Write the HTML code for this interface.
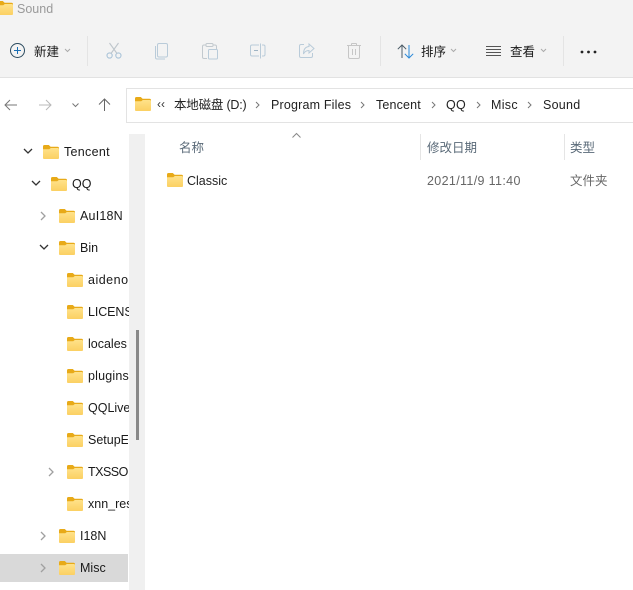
<!DOCTYPE html>
<html><head><meta charset="utf-8"><style>
html,body{margin:0;padding:0}
body{width:633px;height:590px;overflow:hidden;background:#fff;position:relative;font-family:"Liberation Sans","Noto Sans CJK SC",sans-serif;font-size:12.5px;color:#1a1a1a}
.t{position:absolute;white-space:nowrap;line-height:16px}
.a{position:absolute}
svg{position:absolute;overflow:visible}
.clip{overflow:hidden}
</style></head><body>
<svg width="0" height="0" style="position:absolute"><defs>
<linearGradient id="g" x1="0" y1="0" x2="0" y2="1"><stop offset="0" stop-color="#ffe28a"/><stop offset="1" stop-color="#fbd062"/></linearGradient>
<symbol id="f" viewBox="0 0 16 14"><path d="M0 1.600Q0 0 1.500 0H5.800L7.600 1.800H14.500Q16 1.800 16 3.300V5H0Z" fill="#e8aa18"/><path d="M0 4.200H6.200L7.800 3H14.800Q16 3 16 4.200V13Q16 14 15 14H1Q0 14 0 13Z" fill="url(#g)"/></symbol>
</defs></svg>

<div class="a" style="left:0;top:0;width:633px;height:77px;background:#f3f3f3;border-bottom:1px solid #e2e2e2"></div>

<svg style="left:-3px;top:1px" width="16" height="14"><use href="#f"/></svg>
<div class="t" style="left:17px;top:1px;color:#9a9a9a;font-size:12.5px">Sound</div>

<svg style="left:10px;top:43px" width="16" height="16" fill="none" stroke="#2b4a5e" stroke-width="1"><circle cx="7.500" cy="7.500" r="7"/><path d="M7.500 4v7M4 7.500h7" stroke="#1a6fb5"/></svg>
<div class="t" style="left:34px;top:44px">新建</div>
<svg style="left:64px;top:48px" width="8" height="6" fill="none" stroke="#aaa"><path d="M1 1l2.500 2.500L6 1"/></svg>
<div class="a" style="left:87px;top:36px;width:1px;height:30px;background:#e4e4e4"></div>

<svg style="left:106px;top:42px" width="16" height="18" fill="none" stroke="#a9c3d8" stroke-width="1.100"><circle cx="3.600" cy="13.500" r="2.600"/><circle cx="12.400" cy="13.500" r="2.600"/><path d="M5 11.500L12.500 1M11 11.500L3.500 1" stroke="#bfc6cc"/></svg>
<svg style="left:155px;top:43px" width="14" height="17" fill="none" stroke="#b9cbd9"><rect x="2.500" y=".5" width="10" height="13.500" rx="1.500"/><path d="M.5 3v11.500q0 1.500 1.500 1.500h8"/></svg>
<svg style="left:202px;top:43px" width="16" height="17" fill="none" stroke="#c2c9ce"><path d="M4 2H2q-1.500 0-1.500 1.500V14q0 1.500 1.500 1.500h3M11 2h2q1.500 0 1.500 1.500V6"/><rect x="4" y=".5" width="7" height="3" rx="1"/><rect x="6.500" y="6.500" width="9" height="9.500" rx="1" stroke="#b9cbd9"/></svg>
<svg style="left:250px;top:43px" width="16" height="16" fill="none" stroke="#b9cbd9"><path d="M9 2H2Q.5 2 .5 3.500v8Q.5 13 2 13h7M12 2h1.500Q15 2 15 3.500v8Q15 13 13.500 13H12M10.500 .5v15"/><path d="M4 7.500h4" stroke="#9fb4c4"/></svg>
<svg style="left:299px;top:43px" width="16" height="16" fill="none" stroke="#b9cbd9"><path d="M5 1.500H2Q.5 1.500 .5 3v10Q.5 14.500 2 14.500h10q1.500 0 1.500-1.500v-3"/><path d="M10 1l5 4.500-5 4.500V7.500Q6 7.500 4.500 11 4.500 4 10 3.500Z"/></svg>
<svg style="left:347px;top:43px" width="14" height="16" fill="none" stroke="#c6c6c6"><path d="M0 2.500h14M4.500 2.500V1q0-.5.5-.5h4q.5 0 .5.5v1.500M1.500 2.500V14q0 1.500 1.500 1.500h8q1.500 0 1.500-1.500V2.500M5.500 6v6M8.500 6v6"/></svg>
<div class="a" style="left:380px;top:36px;width:1px;height:30px;background:#e4e4e4"></div>

<svg style="left:397px;top:44px" width="18" height="15" fill="none" stroke-width="1"><path d="M5 14V1M.8 5.200L5 1l4.200 4.200" stroke="#4a5a65"/><path d="M12 1v13M7.800 9.800L12 14l4.200-4.200" stroke="#2a88d8"/></svg>
<div class="t" style="left:421px;top:44px">排序</div>
<svg style="left:450px;top:48px" width="8" height="6" fill="none" stroke="#aaa"><path d="M1 1l2.500 2.500L6 1"/></svg>
<svg style="left:486px;top:46px" width="16" height="11" fill="none" stroke="#555"><path d="M0 .5h15M0 3.500h15M0 6.500h15M0 9.500h15" stroke-width=".9"/></svg>
<div class="t" style="left:510px;top:44px">查看</div>
<svg style="left:540px;top:48px" width="8" height="6" fill="none" stroke="#aaa"><path d="M1 1l2.500 2.500L6 1"/></svg>
<div class="a" style="left:563px;top:36px;width:1px;height:30px;background:#e4e4e4"></div>
<svg style="left:580px;top:50px" width="17" height="4" fill="#222"><circle cx="2" cy="2" r="1.400"/><circle cx="8.500" cy="2" r="1.400"/><circle cx="15" cy="2" r="1.400"/></svg>

<svg style="left:4px;top:99px" width="13" height="12" fill="none" stroke="#777" stroke-width="1"><path d="M13 6H1M6 1L1 6l5 5"/></svg>
<svg style="left:39px;top:99px" width="13" height="12" fill="none" stroke="#b8b8b8" stroke-width="1"><path d="M0 6h12M7 1l5 5-5 5"/></svg>
<svg style="left:72px;top:103px" width="7" height="5" fill="none" stroke="#777"><path d="M.5 .5L3.500 3.500 6.500 .5"/></svg>
<svg style="left:98px;top:98px" width="13" height="13" fill="none" stroke="#666" stroke-width="1"><path d="M6.500 13V1M1 6.500L6.500 1 12 6.500"/></svg>

<div class="a" style="left:126px;top:88px;width:520px;height:33px;border:1px solid #e3e3e3;box-sizing:content-box"></div>
<svg style="left:135px;top:97px" width="16" height="14"><use href="#f"/></svg>
<div class="t" style="left:157px;top:96px;font-size:12px;color:#333">‹‹</div>
<div class="t" style="left:174px;top:97px;color:#222;letter-spacing:-.2px">本地磁盘 (D:)</div>
<div class="t" style="left:271px;top:97px;color:#222;letter-spacing:.18px">Program Files</div>
<div class="t" style="left:376px;top:97px;color:#222;letter-spacing:.15px">Tencent</div>
<div class="t" style="left:446px;top:97px;color:#222;letter-spacing:.3px">QQ</div>
<div class="t" style="left:491px;top:97px;color:#222;letter-spacing:.3px">Misc</div>
<div class="t" style="left:543px;top:97px;color:#222;letter-spacing:.25px">Sound</div>
<svg style="left:255px;top:101px" width="6" height="8" fill="none" stroke="#777"><path d="M1 1l3 3-3 3"/></svg>
<svg style="left:360px;top:101px" width="6" height="8" fill="none" stroke="#777"><path d="M1 1l3 3-3 3"/></svg>
<svg style="left:431px;top:101px" width="6" height="8" fill="none" stroke="#777"><path d="M1 1l3 3-3 3"/></svg>
<svg style="left:476px;top:101px" width="6" height="8" fill="none" stroke="#777"><path d="M1 1l3 3-3 3"/></svg>
<svg style="left:527px;top:101px" width="6" height="8" fill="none" stroke="#777"><path d="M1 1l3 3-3 3"/></svg>

<div class="a" style="left:0;top:554px;width:128px;height:28px;background:#d9d9d9"></div>
<div class="a" style="left:129px;top:134px;width:16px;height:456px;background:#f0f0f0"></div>
<div class="a" style="left:136px;top:330px;width:3px;height:110px;background:#8a8a8a"></div>

<svg style="left:23px;top:148px" width="10" height="7" fill="none" stroke="#333" stroke-width="1.300"><path d="M1 1l4 4 4-4"/></svg>
<svg style="left:43px;top:145px" width="16" height="14"><use href="#f"/></svg>
<div class="t" style="left:64px;top:144px;letter-spacing:.3px">Tencent</div>

<svg style="left:31px;top:180px" width="10" height="7" fill="none" stroke="#333" stroke-width="1.300"><path d="M1 1l4 4 4-4"/></svg>
<svg style="left:51px;top:177px" width="16" height="14"><use href="#f"/></svg>
<div class="t" style="left:72px;top:176px">QQ</div>

<svg style="left:40px;top:211px" width="7" height="10" fill="none" stroke="#a0a0a0" stroke-width="1.300"><path d="M1 1l4 4-4 4"/></svg>
<svg style="left:59px;top:209px" width="16" height="14"><use href="#f"/></svg>
<div class="t" style="left:80px;top:208px;letter-spacing:.2px">AuI18N</div>

<svg style="left:39px;top:244px" width="10" height="7" fill="none" stroke="#333" stroke-width="1.300"><path d="M1 1l4 4 4-4"/></svg>
<svg style="left:59px;top:241px" width="16" height="14"><use href="#f"/></svg>
<div class="t" style="left:80px;top:240px">Bin</div>

<svg style="left:67px;top:273px" width="16" height="14"><use href="#f"/></svg>
<div class="t clip" style="left:88px;top:272px;width:40px;letter-spacing:.5px">aidenoise</div>
<svg style="left:67px;top:305px" width="16" height="14"><use href="#f"/></svg>
<div class="t clip" style="left:88px;top:304px;width:41px;letter-spacing:-.1px">LICENSES</div>
<svg style="left:67px;top:337px" width="16" height="14"><use href="#f"/></svg>
<div class="t clip" style="left:88px;top:336px;width:41px">locales</div>
<svg style="left:67px;top:369px" width="16" height="14"><use href="#f"/></svg>
<div class="t clip" style="left:88px;top:368px;width:41px;letter-spacing:.2px">plugins</div>
<svg style="left:67px;top:401px" width="16" height="14"><use href="#f"/></svg>
<div class="t clip" style="left:88px;top:400px;width:41px">QQLiveSDK</div>
<svg style="left:67px;top:433px" width="16" height="14"><use href="#f"/></svg>
<div class="t clip" style="left:88px;top:432px;width:40px">SetupEx</div>
<svg style="left:48px;top:467px" width="7" height="10" fill="none" stroke="#a0a0a0" stroke-width="1.300"><path d="M1 1l4 4-4 4"/></svg>
<svg style="left:67px;top:465px" width="16" height="14"><use href="#f"/></svg>
<div class="t clip" style="left:88px;top:464px;width:40px;letter-spacing:-.5px">TXSSO</div>
<svg style="left:67px;top:497px" width="16" height="14"><use href="#f"/></svg>
<div class="t clip" style="left:88px;top:496px;width:41px">xnn_res</div>
<svg style="left:40px;top:531px" width="7" height="10" fill="none" stroke="#a0a0a0" stroke-width="1.300"><path d="M1 1l4 4-4 4"/></svg>
<svg style="left:59px;top:529px" width="16" height="14"><use href="#f"/></svg>
<div class="t" style="left:80px;top:528px">I18N</div>
<svg style="left:40px;top:563px" width="7" height="10" fill="none" stroke="#a0a0a0" stroke-width="1.300"><path d="M1 1l4 4-4 4"/></svg>
<svg style="left:59px;top:561px" width="16" height="14"><use href="#f"/></svg>
<div class="t" style="left:80px;top:560px">Misc</div>

<svg style="left:292px;top:133px" width="9" height="5" fill="none" stroke="#888"><path d="M.5 4.500L4.500 .5l4 4"/></svg>
<div class="t" style="left:179px;top:140px;color:#5a6a78">名称</div>
<div class="a" style="left:420px;top:134px;width:1px;height:26px;background:#e5e5e5"></div>
<div class="t" style="left:427px;top:140px;color:#5a6a78">修改日期</div>
<div class="a" style="left:564px;top:134px;width:1px;height:26px;background:#e5e5e5"></div>
<div class="t" style="left:570px;top:140px;color:#5a6a78">类型</div>

<svg style="left:167px;top:173px" width="16" height="14"><use href="#f"/></svg>
<div class="t" style="left:187px;top:173px;color:#222">Classic</div>
<div class="t" style="left:427px;top:173px;color:#666;letter-spacing:.35px">2021/11/9 11:40</div>
<div class="t" style="left:570px;top:173px;color:#666">文件夹</div>
</body></html>
